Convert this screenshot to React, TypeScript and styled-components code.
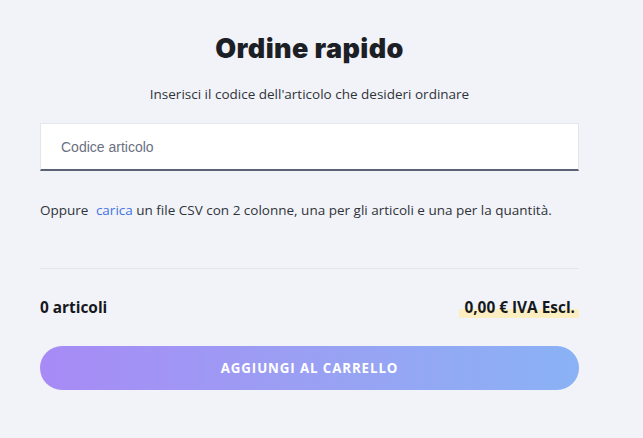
import React from 'react';
import styled, { createGlobalStyle } from 'styled-components';

const GlobalStyle = createGlobalStyle`
  html, body {
    margin: 0;
    padding: 0;
    background: #f2f3f8;
  }
  body {
    font-family: "Open Sans", "Noto Sans", sans-serif;
    color: #1f2329;
  }
`;

const Page = styled.main`
  width: 539px;
  margin: 0 auto;
  padding: 31px 0 0;
  transform: translateX(-12px);
`;

const Title = styled.h1`
  margin: 0;
  text-align: center;
  font-family: Inter, "Noto Sans", sans-serif;
  font-weight: 900;
  font-size: 27px;
  line-height: 36px;
  color: #1c1f26;
  letter-spacing: 0.4px;
`;

const Subtitle = styled.p`
  margin: 18px 0 0;
  text-align: center;
  font-size: 13.5px;
  line-height: 18px;
  color: #2f3338;
`;

const Input = styled.input`
  display: block;
  box-sizing: border-box;
  width: 100%;
  height: 48px;
  margin-top: 20px;
  padding: 0 20px;
  border: 1px solid #e4e6ee;
  border-bottom: 2px solid #5b6275;
  background: #fff;
  font-family: "Liberation Sans", Arial, sans-serif;
  font-size: 14px;
  outline: none;
  &::placeholder {
    color: #6b7080;
  }
`;

const Hint = styled.p`
  margin: 30px 0 0;
  font-size: 13.5px;
  line-height: 18px;
  color: #2f3338;
`;

const Link = styled.a`
  color: #4274e2;
  text-decoration: none;
  margin-left: 4px;
`;

const Divider = styled.hr`
  margin: 49px 0 0;
  border: 0;
  border-top: 1px solid #e3e5ec;
`;

const Summary = styled.div`
  display: flex;
  justify-content: space-between;
  align-items: center;
  margin-top: 29px;
  font-weight: 700;
  font-size: 15.4px;
  line-height: 20px;
  color: #15181d;
`;

const Price = styled.span`
  padding: 0 4px 0 5px;
  background: linear-gradient(to bottom, transparent 55%, #fbeec0 55%);
`;

const Button = styled.button`
  display: block;
  width: 100%;
  height: 44px;
  margin-top: 28px;
  border: 0;
  border-radius: 22px;
  background: linear-gradient(90deg, #a78af6 0%, #9aa0f3 50%, #8ab2f5 100%);
  color: #fff;
  font-family: "Open Sans", "Noto Sans", sans-serif;
  font-weight: 700;
  font-size: 13.3px;
  letter-spacing: 0.9px;
  cursor: pointer;
`;

const App = () => {
  return (
    <>
      <GlobalStyle />
      <Page>
        <Title>Ordine rapido</Title>
        <Subtitle>Inserisci il codice dell'articolo che desideri ordinare</Subtitle>
        <Input placeholder="Codice articolo" />
        <Hint>
          Oppure <Link href="#">carica</Link> un file CSV con 2 colonne, una per gli articoli e una per la quantità.
        </Hint>
        <Divider />
        <Summary>
          <span>0 articoli</span>
          <Price>0,00 € IVA Escl.</Price>
        </Summary>
        <Button>AGGIUNGI AL CARRELLO</Button>
      </Page>
    </>
  );
};

export default App;
